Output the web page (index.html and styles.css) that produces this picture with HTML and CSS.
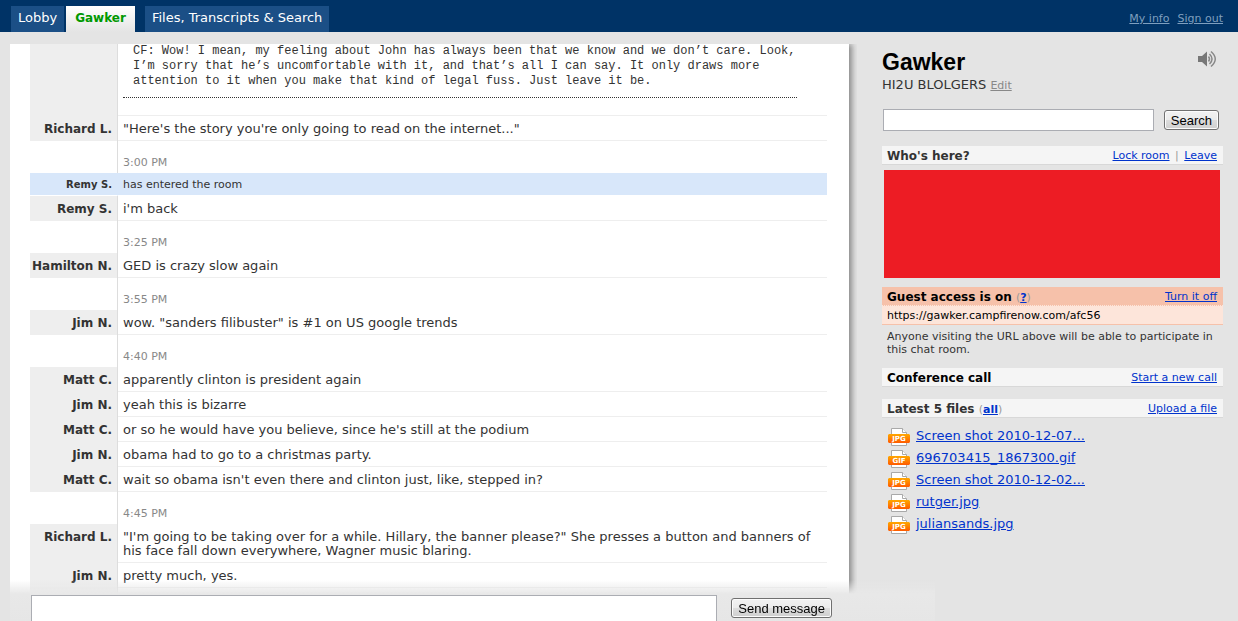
FILE: index.html
```html
<!DOCTYPE html>
<html lang="en">
<head>
    <meta charset="UTF-8">
    <meta name="viewport" content="width=device-width, initial-scale=1.0">
    <title>Gawker</title>
    <link rel="stylesheet" href="styles.css">
</head>
<body>

<!-- shared page shape behind each file badge -->
<svg class="defs" aria-hidden="true">
    <defs>
        <linearGradient id="badge" x1="0" y1="0" x2="0" y2="1">
            <stop offset="0" stop-color="#ffa800"/>
            <stop offset="1" stop-color="#ff5a00"/>
        </linearGradient>
        <symbol id="page" viewBox="0 0 22 18">
            <path d="M3.5 0.5H14.5L18.5 4.5V17.5H3.5Z" fill="#fff" stroke="#a9a9a9"/>
            <path d="M14.5 0.5V4.5H18.5" fill="#fff" stroke="#a9a9a9"/>
            <path d="M1 6H21L22 7V14L21 15H1L0 14V7Z" fill="url(#badge)"/>
        </symbol>
    </defs>
</svg>

<header class="header">
    <nav class="tabs">
        <a class="tab" href="#">Lobby</a>
        <a class="tab active" href="#">Gawker</a>
        <a class="tab files" href="#">Files, Transcripts &amp; Search</a>
    </nav>
    <div class="account">
        <a href="#">My info</a>
        <a href="#">Sign out</a>
    </div>
</header>

<div class="layout">
    <main class="paper">
        <table class="chat">
            <tbody>
                <tr class="paste">
                    <th></th>
                    <td><pre>CF: Wow! I mean, my feeling about John has always been that we know and we don’t care. Look,
I’m sorry that he’s uncomfortable with it, and that’s all I can say. It only draws more
attention to it when you make that kind of legal fuss. Just leave it be.</pre></td>
                </tr>
                <tr class="message"><th>Richard L.</th><td>"Here's the story you're only going to read on the internet..."</td></tr>
                <tr class="time"><th></th><td>3:00 PM</td></tr>
                <tr class="enter"><th>Remy S.</th><td>has entered the room</td></tr>
                <tr class="message"><th>Remy S.</th><td>i'm back</td></tr>
                <tr class="time"><th></th><td>3:25 PM</td></tr>
                <tr class="message"><th>Hamilton N.</th><td>GED is crazy slow again</td></tr>
                <tr class="time"><th></th><td>3:55 PM</td></tr>
                <tr class="message"><th>Jim N.</th><td>wow. "sanders filibuster" is #1 on US google trends</td></tr>
                <tr class="time"><th></th><td>4:40 PM</td></tr>
                <tr class="message"><th>Matt C.</th><td>apparently clinton is president again</td></tr>
                <tr class="message"><th>Jim N.</th><td>yeah this is bizarre</td></tr>
                <tr class="message"><th>Matt C.</th><td>or so he would have you believe, since he's still at the podium</td></tr>
                <tr class="message"><th>Jim N.</th><td>obama had to go to a christmas party.</td></tr>
                <tr class="message"><th>Matt C.</th><td>wait so obama isn't even there and clinton just, like, stepped in?</td></tr>
                <tr class="time"><th></th><td>4:45 PM</td></tr>
                <tr class="message"><th>Richard L.</th><td>"I'm going to be taking over for a while. Hillary, the banner please?" She presses a button and banners of his face fall down everywhere, Wagner music blaring.</td></tr>
                <tr class="message"><th>Jim N.</th><td>pretty much, yes.</td></tr>
                <tr class="message"><th></th><td></td></tr>
            </tbody>
        </table>
    </main>

    <aside class="sidebar">
        <div class="room">
            <h1>Gawker</h1>
            <button class="sound" type="button" aria-label="Sound">
                <svg width="20" height="18" viewBox="0 0 20 18">
                    <path d="M0 6H4L9 1.5V16.5L4 12H0Z" fill="#777"/>
                    <g fill="none" stroke="#888" stroke-width="1.5">
                        <path d="M10.5 6.5Q12.5 9 10.5 11.5"/>
                        <path d="M11.5 4Q16.5 9 11.5 14"/>
                        <path d="M13 1.5Q21.5 9 13 16.5"/>
                    </g>
                </svg>
            </button>
        </div>
        <p class="topic">HI2U BLOLGERS <a href="#">Edit</a></p>

        <form class="search">
            <input type="text" aria-label="Search transcripts">
            <button type="button">Search</button>
        </form>

        <div class="bar">
            <h2>Who's here?</h2>
            <span class="links"><a href="#">Lock room</a> <i>|</i> <a href="#">Leave</a></span>
        </div>
        <div class="people"></div>

        <div class="bar guest">
            <h2>Guest access is on <small>(<a href="#">?</a>)</small></h2>
            <span class="links"><a href="#">Turn it off</a></span>
        </div>
        <div class="guest-url">https://gawker.campfirenow.com/afc56</div>
        <p class="note">Anyone visiting the URL above will be able to participate in this chat room.</p>

        <div class="bar conference">
            <h2>Conference call</h2>
            <span class="links"><a href="#">Start a new call</a></span>
        </div>

        <div class="bar">
            <h2>Latest 5 files <small>(<a href="#">all</a>)</small></h2>
            <span class="links"><a href="#">Upload a file</a></span>
        </div>
        <ul class="file-list">
            <li><svg class="icon" viewBox="0 0 22 18"><use href="#page"/><text x="11" y="13">JPG</text></svg><a href="#">Screen shot 2010-12-07...</a></li>
            <li><svg class="icon" viewBox="0 0 22 18"><use href="#page"/><text x="11" y="13">GIF</text></svg><a href="#">696703415_1867300.gif</a></li>
            <li><svg class="icon" viewBox="0 0 22 18"><use href="#page"/><text x="11" y="13">JPG</text></svg><a href="#">Screen shot 2010-12-02...</a></li>
            <li><svg class="icon" viewBox="0 0 22 18"><use href="#page"/><text x="11" y="13">JPG</text></svg><a href="#">rutger.jpg</a></li>
            <li><svg class="icon" viewBox="0 0 22 18"><use href="#page"/><text x="11" y="13">JPG</text></svg><a href="#">juliansands.jpg</a></li>
        </ul>
    </aside>
</div>

<form class="composer">
    <textarea aria-label="Message"></textarea>
    <button type="button">Send message</button>
</form>

</body>
</html>
```
FILE: styles.css
```css
* {
    box-sizing: border-box;
}

body {
    margin: 0;
    height: 100vh;
    display: flex;
    flex-direction: column;
    overflow: hidden;
    background: #e4e4e4;
    color: #333;
    font: 13px/14px Verdana, "DejaVu Sans", sans-serif;
}

a {
    color: #03c;
}

h1, h2, p, ul, pre {
    margin: 0;
    padding: 0;
}

.defs {
    position: absolute;
    width: 0;
    height: 0;
}

/* header */
.header {
    flex: none;
    display: flex;
    justify-content: space-between;
    align-items: flex-end;
    height: 32px;
    padding: 0 15px 0 11px;
    background: #036;
}

.tabs {
    display: flex;
    gap: 2px;
}

.tab {
    height: 26px;
    padding: 0 7px;
    line-height: 24px;
    background: #1b4f86;
    color: #fff;
    text-decoration: none;
}

.tab.active {
    padding: 0 9px;
    background: linear-gradient(#fff, #e4e4e4);
    color: #090;
    font-size: 12px;
    font-weight: bold;
}

.tab.files {
    margin-left: 8px;
}

.account {
    display: flex;
    gap: 8px;
    padding-bottom: 6px;
    font-size: 11px;
}

.account a {
    color: #7f9fbf;
}

/* chat */
.layout {
    flex: 1;
    min-height: 0;
    display: flex;
    gap: 33px;
    padding: 12px 15px 0 10px;
}

.paper {
    flex: 1;
    overflow: hidden;
    padding: 0 22px 0 20px;
    background: #fff;
    box-shadow: 3px 0 6px #888;
    clip-path: inset(0 -8px 0 0);
}

.chat {
    width: 100%;
    table-layout: fixed;
    border-collapse: separate;
    border-spacing: 0;
}

.chat th {
    width: 88px;
    padding: 6px 5px 4px 2px;
    border-right: 1px solid #ddd;
    font-size: 12px;
    text-align: right;
    vertical-align: top;
    white-space: nowrap;
}

.chat td {
    padding: 6px 30px 4px 5px;
    border-bottom: 1px solid #eee;
    vertical-align: top;
}

.paste th,
.message th {
    background: #eee;
}

.message td {
    height: 25px;
    padding-right: 14px;
}

.chat .paste td {
    padding-top: 0;
    padding-bottom: 17px;
}

.paste pre {
    padding: 0 0 8px 10px;
    border-bottom: 1px dotted #333;
    font: 12px/15px "Courier New", "Liberation Mono", monospace;
}

.chat .message td {
    padding-right: 14px;
}

.chat .time td {
    padding-top: 15px;
    padding-bottom: 3px;
    border-bottom: 0;
    color: #888;
    font-size: 11px;
}

.chat .enter th,
.chat .enter td {
    padding-top: 5px;
    padding-bottom: 3px;
    border-bottom: 1px solid #fff;
    background: #d8e7fa;
    font-size: 11px;
}

.chat .enter th {
    border-right-color: #d8e7fa;
    font-size: 10px;
}

/* sidebar */
.sidebar {
    flex: none;
    width: 341px;
}

.room {
    display: flex;
    justify-content: space-between;
    padding: 6px 5px 0 0;
}

.room h1 {
    color: #000;
    font: bold 23px/24px Arial, "Liberation Sans", sans-serif;
}

.sound {
    height: 18px;
    padding: 0;
    border: 0;
    background: none;
}

.topic {
    padding: 4px 0 16px;
}

.topic a {
    color: #888;
    font-size: 11px;
}

.search {
    display: flex;
    align-items: center;
    gap: 10px;
    padding: 0 4px 0 1px;
    margin-bottom: 15px;
}

.search input {
    flex: 1;
    min-width: 0;
    height: 22px;
    border: 1px solid #abadb3;
    background: #fff;
}

.search button,
.composer button {
    height: 20px;
    padding: 1px 6px 0;
    border: 1px solid #707070;
    border-radius: 3px;
    background: linear-gradient(#f2f2f2 0%, #ebebeb 50%, #ddd 50%, #cfcfcf 100%);
    box-shadow: inset 0 0 0 1px #fcfcfc;
    color: #000;
    font: 13px/16px Arial, "Liberation Sans", sans-serif;
}

.bar {
    display: flex;
    justify-content: space-between;
    height: 19px;
    padding: 0 6px 0 5px;
    border-bottom: 1px solid #d8d8d8;
    background: #f5f5f5;
    line-height: 20px;
}

.bar h2 {
    font-size: 12px;
    line-height: 20px;
}

.bar small {
    color: #999;
    font-size: 11px;
    font-weight: normal;
}

.bar small a {
    font-weight: bold;
}

.links {
    font-size: 11px;
}

.links i {
    margin: 0 2px;
    color: #999;
    font-style: normal;
}

.people {
    height: 108px;
    margin: 5px 3px 9px 2px;
    background: #ed1c24;
}

.guest {
    border-bottom: 1px dotted #fde5da;
    background: #f6c1aa;
}

.guest h2,
.conference h2 {
    color: #000;
}

.guest-url {
    padding: 3px 5px 1px;
    border-bottom: 1px solid #f6c1aa;
    background: #fde5da;
    color: #000;
    font-size: 11px;
    line-height: 14px;
}

.note {
    padding: 5px 5px 12px;
    font-size: 11px;
    line-height: 13px;
}

.conference {
    margin-bottom: 12px;
}

.file-list {
    padding: 9px 6px;
    list-style: none;
}

.file-list li {
    display: flex;
    gap: 6px;
    height: 22px;
    line-height: 18px;
}

.icon {
    width: 22px;
    height: 18px;
    margin-top: 1px;
}

.icon text {
    fill: #fff;
    font: bold 7px Verdana, "DejaVu Sans", sans-serif;
    text-anchor: middle;
}

/* message box stays over the bottom of the transcript */
.composer {
    position: fixed;
    left: 10px;
    right: 303px;
    bottom: 0;
    display: flex;
    align-items: flex-start;
    gap: 14px;
    padding: 15px 103px 0 21px;
    background: linear-gradient(rgba(232, 232, 232, 0), #e8e8e8 14px, #e6e6e6);
}

.composer textarea {
    flex: 1;
    height: 26px;
    border: 1px solid #abadb3;
    border-bottom: 0;
    background: #fff;
    resize: none;
}

.composer button {
    margin-top: 3px;
}
```
